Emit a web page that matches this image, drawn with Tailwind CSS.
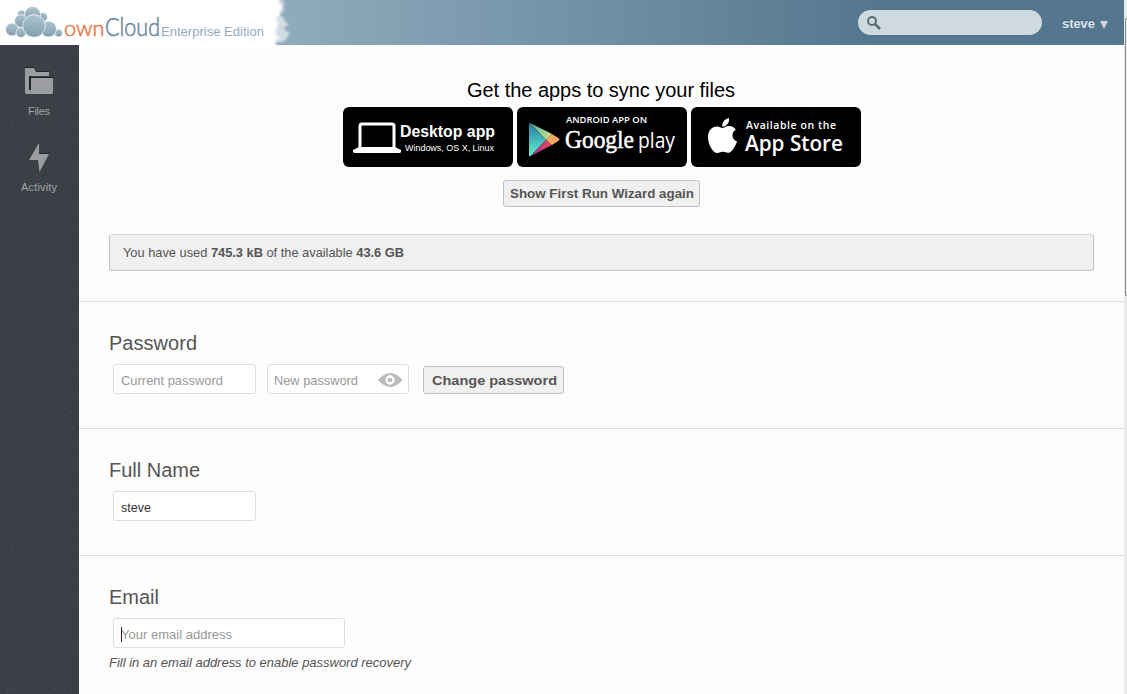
<!DOCTYPE html>
<html lang="en">
<head>
<meta charset="utf-8">
<title>ownCloud</title>
<script src="https://cdn.jsdelivr.net/npm/@tailwindcss/browser@4"></script>
</head>
<body class="flex h-[694px] w-[1127px] overflow-hidden bg-[#fdfdfd] font-['Liberation_Sans',Arial,sans-serif] text-[13px] text-[#555]">
<div class="flex h-full w-[1124px] flex-col">
  <header class="relative flex h-[45px] shrink-0 items-start bg-linear-to-r from-[#8eabbc] from-[26%] to-[#54778f] to-[78%]">
    <svg class="h-[45px] w-[320px] shrink-0" viewBox="0 0 320 45">
      <defs>
        <linearGradient id="cl" x1="0" y1="0" x2="0" y2="1"><stop offset="0" stop-color="#adc5cf"/><stop offset="1" stop-color="#7f9fae"/></linearGradient>
        <filter id="soft" x="-50%" y="-20%" width="200%" height="140%"><feTurbulence type="fractalNoise" baseFrequency=".15" numOctaves="2" seed="4" result="n"/><feDisplacementMap in="SourceGraphic" in2="n" scale="8" xChannelSelector="R" yChannelSelector="G"/><feGaussianBlur stdDeviation="1"/></filter>
      </defs>
      <path fill="#fff" d="M0 0H272V45H0Z"/>
      <g fill="#fff" filter="url(#soft)">
        <path d="M262-8H279L279 3L284 5L280 12L278 20L279 26L275 32L278 37L277 53H262Z"/>
        <path opacity=".6" d="M276 16L283 19L289 24L284 28L290 33L285 41L279 44L276 38Z"/>
        <path opacity=".5" d="M278-4L284 0L285 10L278 16Z"/>
      </g>
      <g fill="url(#cl)" stroke="#fff" stroke-width=".7">
        <circle cx="21.500" cy="14" r="4"/><circle cx="43" cy="17" r="4.500"/>
        <circle cx="32.500" cy="14.500" r="8"/><circle cx="21" cy="21" r="6.500"/>
        <circle cx="12" cy="29.500" r="6.500"/><circle cx="21" cy="32.500" r="5"/>
        <circle cx="58.500" cy="33" r="4"/><circle cx="48.500" cy="29" r="8"/>
        <circle cx="34" cy="26" r="11.300"/>
      </g>
      <g font-family="Lato" font-weight="300">
        <text x="64" y="35.700" font-size="21.500" fill="#ec7440" stroke="#ec7440" stroke-width=".5" textLength="40.500" lengthAdjust="spacingAndGlyphs">own</text>
        <text x="105" y="35.800" font-size="24.500" stroke="#6b8c9e" stroke-width=".6" fill="#6b8c9e" textLength="55" lengthAdjust="spacingAndGlyphs">Cloud</text>
      </g>
      <text x="161" y="36" font-family="Liberation Sans" font-size="13" fill="#94aabd" textLength="103">Enterprise Edition</text>
    </svg>
    <div class="mt-[10px] ml-auto flex h-[25px] w-[184px] items-center rounded-full bg-[#cfd9e0] pl-2">
      <svg width="16" height="16" viewBox="0 0 16 16" fill="none" stroke="#596b77"><circle cx="6" cy="6" r="4" stroke-width="2"/><path d="M9 9L14 14" stroke-width="2.600"/></svg>
    </div>
    <div class="mt-[14px] ml-5 w-[62px] text-[13px] leading-[18px] font-bold text-[#dde4e9] [text-shadow:0_-1px_0_#3f6078]">
      <svg width="62" height="18"><text x="0" y="14" fill="#dfe5ea" textLength="33">steve</text><path fill="#cdd8df" d="M38 7H46L42 15Z"/></svg>
    </div>
  </header>
  <div class="flex min-h-0 flex-1">
    <nav class="flex w-[79px] shrink-0 flex-col bg-[#383c43]">
      <svg width="79" height="649" viewBox="0 45 79 649">
        <defs><filter id="noise" x="0" y="0" width="100%" height="100%"><feTurbulence type="fractalNoise" baseFrequency=".6" numOctaves="2" seed="2"/><feColorMatrix values="0 0 0 0 1  0 0 0 0 1  0 0 0 0 1  .1 0 0 0 -.03"/></filter></defs>
        <rect y="45" width="79" height="649" fill="#373c43"/><rect y="45" width="79" height="649" filter="url(#noise)"/>
        <path fill="#20242a" d="M25 67H34L36 71H49V76H25Z"/>
        <path fill="#9c9da0" d="M25 68H34L36 72H49V75H29V90H31V78H53V92.500Q53 94 51.500 94H26.500Q25 94 25 92.500Z"/>
        <path fill="#20242a" d="M29 76H31V90H29ZM30 77H53V78H30Z"/>
        <path fill="#9c9da0" d="M29 75H49V76H29Z"/>
        <path fill="#20242a" d="M39 153H49V154H39Z"/>
        <path fill="#9c9da0" d="M39 143L29 160H38L39.500 172L49 154H39Z"/>
        <g font-family="Liberation Sans" font-size="11" fill="#a1a3a8">
          <text x="28" y="115" textLength="22">Files</text>
          <text x="21" y="191" textLength="36">Activity</text>
        </g>
      </svg>
    </nav>
    <main class="flex min-w-0 flex-1 flex-col">
      <section class="flex h-[257px] shrink-0 flex-col items-center border-b border-[#ddd] px-[30px] pt-[33px]">
        <h2 class="h-[29px] text-[20px] leading-6 whitespace-nowrap text-black"><svg width="269" height="29"><text x="0" y="19" textLength="268" fill="#000">Get the apps to sync your files</text></svg></h2>
        <div class="flex gap-1">
          <svg width="170" height="60" viewBox="0 0 170 60" fill="#fff">
            <rect width="170" height="60" rx="6" fill="#000"/>
            <rect x="17" y="17" width="34" height="26" rx="2" fill="none" stroke="#fff" stroke-width="3"/>
            <path d="M16 40H52L58 43V44.500Q58 46 56 46H12Q10 46 10 44.500V43Z"/>
            <text x="57" y="30" font-family="Liberation Sans" font-weight="700" font-size="16.500" textLength="95" lengthAdjust="spacingAndGlyphs">Desktop app</text>
            <text x="62" y="43.500" font-family="Liberation Sans" font-size="9" textLength="89">Windows, OS X, Linux</text>
          </svg>
          <svg width="170" height="60" viewBox="0 0 170 60" fill="#fff">
            <defs><linearGradient id="g1" x1="0" y1="0" x2="0" y2="1"><stop offset="0" stop-color="#2879a9"/><stop offset="1" stop-color="#62f5cb"/></linearGradient>
            <linearGradient id="g2"><stop offset="0" stop-color="#4ba99e"/><stop offset="1" stop-color="#c9e68b"/></linearGradient>
            <linearGradient id="g3"><stop offset="0" stop-color="#8c35a5"/><stop offset="1" stop-color="#ee4555"/></linearGradient></defs>
            <rect width="170" height="60" rx="6" fill="#000"/>
            <path fill="url(#g1)" d="M12 16L29 33L13 49.500Q12 49 12 48Z"/>
            <path fill="url(#g2)" d="M12 15.500L35 27L29 33Z"/>
            <path fill="url(#g3)" d="M13 49.500L29 33L35 38Z"/>
            <path fill="#f5aa62" d="M35 27L42 31.500Q43 32.500 42 33.500L35 38L29 33Z"/>
            <text x="49" y="16" font-family="Open Sans" font-weight="600" font-size="8.800" textLength="81" lengthAdjust="spacingAndGlyphs">ANDROID APP ON</text>
            <text x="48" y="41" font-family="Liberation Serif" font-size="25" stroke="#fff" stroke-width=".5" textLength="69" lengthAdjust="spacingAndGlyphs">Google</text>
            <text x="121" y="41" font-family="Open Sans" font-weight="400" font-size="22" textLength="37" lengthAdjust="spacingAndGlyphs">play</text>
          </svg>
          <svg width="170" height="60" viewBox="0 0 170 60" fill="#fff">
            <rect width="170" height="60" rx="6" fill="#000"/>
            <path d="M38 11Q38.500 15 36 17.500Q34 20 31 19.500Q31 16 33 13.700Q35 11.500 38 11Z"/>
            <path d="M31.500 21C33 21 34.500 19 38 19C41 19 43.500 20.600 44.800 22.500C40 25.500 40.500 32.500 46 34.500C45 37.500 42 44 38.500 45.500C36 46.500 34.500 44.800 31.800 44.800C29 44.800 27.500 46.500 25.500 46C20.500 44.500 17 36 17 30C17 23 21.500 19.500 25.500 19.500C28 19.500 30 21 31.500 21Z"/>
            <text x="55" y="22" font-family="Open Sans" font-weight="600" font-size="10.500" textLength="90">Available on the</text>
            <text x="54" y="44" font-family="Open Sans" font-weight="600" font-size="22" textLength="98" lengthAdjust="spacingAndGlyphs">App Store</text>
          </svg>
        </div>
        <button class="mt-[13px] h-[27px] w-[197px] shrink-0 rounded-[3px] border border-[#c0c0c0] bg-[#f0f0f0] font-bold"><svg width="195" height="25"><text x="6" y="17" fill="#555" font-size="13.500" textLength="184" lengthAdjust="spacingAndGlyphs">Show First Run Wizard again</text></svg></button>
        <div class="mt-[27px] h-[37px] w-full rounded-[3px] border border-[#c3c3c3] border-t-[#d8d8d8] bg-[#f0f0f0]"><svg width="400" height="35"><text x="13" y="22" fill="#555" textLength="281" lengthAdjust="spacingAndGlyphs">You have used <tspan font-weight="700">745.3 kB</tspan> of the available <tspan font-weight="700">43.6 GB</tspan></text></svg></div>
      </section>
      <section class="h-[127px] shrink-0 border-b border-[#ddd] px-[30px] pt-[28px]">
        <h2 class="h-[34px] text-[20px]"><svg width="100" height="32"><text x="0" y="20" fill="#555" textLength="88">Password</text></svg></h2>
        <div class="ml-1 flex items-start">
          <div class="h-[30px] w-[143px] rounded-[3px] border border-[#ddd] bg-white"><svg width="141" height="28"><text x="7" y="20" fill="#999" textLength="102" lengthAdjust="spacingAndGlyphs">Current password</text></svg></div>
          <div class="ml-[11px] h-[30px] w-[142px] rounded-[3px] border border-[#ddd] bg-white"><svg width="140" height="28"><text x="6" y="20" fill="#999" textLength="84" lengthAdjust="spacingAndGlyphs">New password</text><path fill="#bbb" d="M110 15Q122.500 1 134.500 15Q122.500 29 110 15Z"/><circle cx="122" cy="15" r="3.500" fill="#bbb" stroke="#fff" stroke-width="2.300"/></svg></div>
          <button class="mt-[2px] ml-[14px] h-[28px] w-[141px] rounded-[3px] border border-[#c0c0c0] bg-[#f0f0f0] font-bold"><svg width="139" height="26"><text x="8" y="18" fill="#555" font-size="13.500" textLength="125" lengthAdjust="spacingAndGlyphs">Change password</text></svg></button>
        </div>
      </section>
      <section class="h-[127px] shrink-0 border-b border-[#ddd] px-[30px] pt-[28px]">
        <h2 class="h-[34px] text-[20px]"><svg width="100" height="32"><text x="0" y="20" fill="#555" textLength="91">Full Name</text></svg></h2>
        <div class="ml-1 h-[30px] w-[143px] rounded-[3px] border border-[#ddd] bg-white"><svg width="141" height="28"><text x="7" y="20" fill="#333" textLength="30" lengthAdjust="spacingAndGlyphs">steve</text></svg></div>
      </section>
      <section class="px-[30px] pt-[28px]">
        <h2 class="h-[34px] text-[20px]"><svg width="100" height="32"><text x="0" y="20" fill="#555" textLength="50">Email</text></svg></h2>
        <div class="ml-1 h-[30px] w-[232px] rounded-[3px] border border-[#ddd] bg-white"><svg width="230" height="28"><text x="7" y="20" fill="#999" textLength="111" lengthAdjust="spacingAndGlyphs">Your email address</text><path fill="#222" d="M7 8h1v15h-1z"/></svg></div>
        <em class="mt-[5px] block"><svg width="320" height="20"><text x="0" y="14" fill="#555" textLength="302">Fill in an email address to enable password recovery</text></svg></em>
      </section>
    </main>
  </div>
</div>
<div class="h-full w-[3px] bg-[#eaeaea] pt-[18px] pl-px"><div class="h-[278px] w-[2px] rounded-l-sm border-y border-l border-[#8a8a8a] bg-[#eee]"></div></div>
</body>
</html>
